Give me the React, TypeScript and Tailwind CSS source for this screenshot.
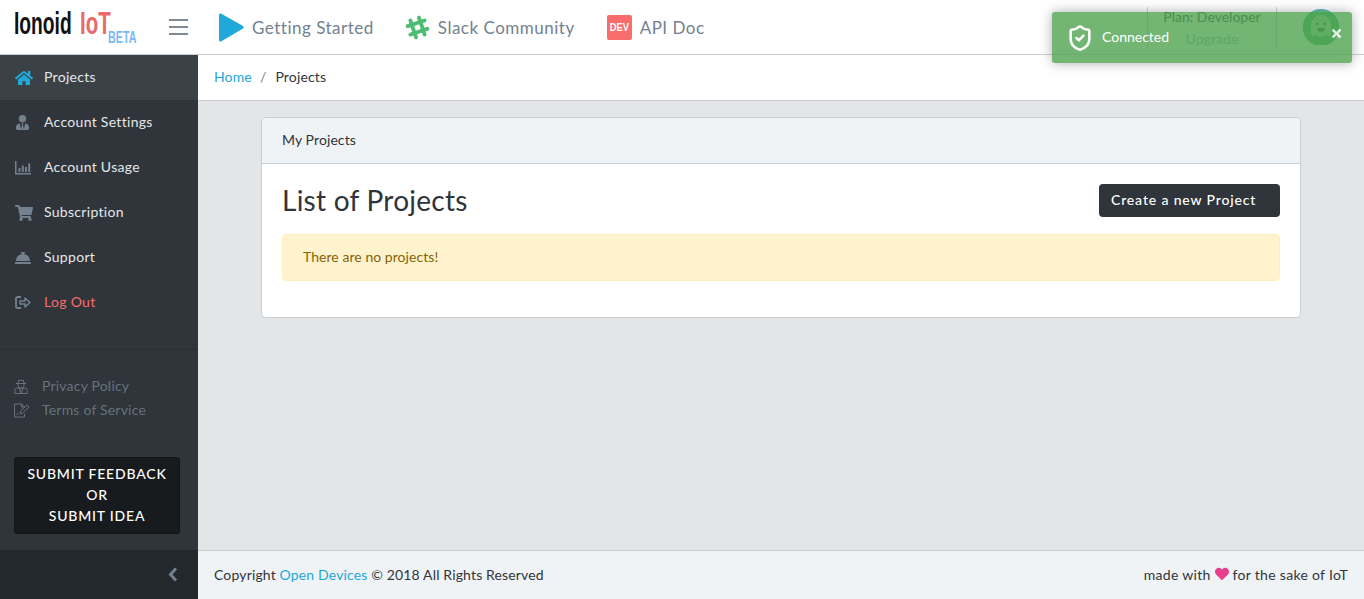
import { ShieldCheck } from "lucide-react";
import {
  FaConciergeBell,
  FaHeart,
  FaHome,
  FaShoppingCart,
  FaSlackHash,
  FaTimes,
  FaUserTie,
} from "react-icons/fa";
import type { ReactNode } from "react";

function UsageIcon() {
  return (
    <svg width="16" height="14" viewBox="0 0 16 14" fill="currentColor">
      <path d="M0 0h1.5v12H16v1.5H0z" />
      <rect x="3.5" y="7" width="2" height="4" />
      <rect x="6.8" y="4.5" width="2" height="6.5" />
      <rect x="10" y="6" width="2" height="5" />
      <rect x="13.2" y="2.5" width="2" height="8.5" />
    </svg>
  );
}

function LogoutIcon() {
  return (
    <svg width="16" height="13" viewBox="0 0 16 13" fill="none" stroke="currentColor">
      <path d="M6 1H2.5A1.5 1.5 0 0 0 1 2.5v8A1.5 1.5 0 0 0 2.5 12H6" strokeWidth="1.8" />
      <path d="M5 5h5V2l5 4.5-5 4.5V8H5z" strokeWidth="1.5" strokeLinejoin="round" />
    </svg>
  );
}

function SecretIcon() {
  return (
    <svg width="14" height="15" viewBox="0 0 14 15" fill="none" stroke="currentColor" strokeWidth="1">
      <path d="M4 4l.8-3 2.2.6L9.2 1 10 4M2 4.5h10" />
      <path d="M4 5v1.5a3 3 0 0 0 6 0V5" />
      <path d="M.8 14.5v-3A2.5 2.5 0 0 1 3.5 9h7a2.5 2.5 0 0 1 2.7 2.5v3zM5 9l2 5.5L9 9" />
    </svg>
  );
}

function TermsIcon() {
  return (
    <svg width="16" height="15" viewBox="0 0 16 15" fill="none" stroke="currentColor" strokeWidth="1">
      <path d="M10.5 10.5v3.5h-10V1h7l3 3v1" />
      <path d="M7.5 1v3h3" />
      <path d="M6 10.5l.7-2.5 6.3-6 2 2-6.3 6zM2.5 11.5c1-1.5 1.5-1 2 0" />
    </svg>
  );
}

function GhostAvatar() {
  return (
    <svg width="36" height="36" viewBox="0 0 36 36">
      <circle cx="18" cy="18" r="18" fill="#20a8d8" />
      <path d="M0 18a18 18 0 0 1 36 0 18 18 0 0 1-36 0z" fill="#3fb56f" transform="translate(0 1)" />
      <path d="M8 26V16a10 10 0 0 1 20 0v10c-2 2-4 1-5-1-1 3-3 3-5 3s-4 0-5-3c-1 2-3 3-5 1z" fill="#a4d6ab" />
      <circle cx="14.5" cy="15" r="1.3" fill="#2f5d3a" />
      <circle cx="21.5" cy="15" r="1.3" fill="#2f5d3a" />
      <path d="M14 19h8c0 2.5-1.8 3.6-4 3.6s-4-1.1-4-3.6z" fill="#2f5d3a" />
    </svg>
  );
}

const NAV: { label: string; icon: ReactNode; active?: boolean; danger?: boolean }[] = [
  { label: "Projects", icon: <FaHome size={18} className="text-[#20a8d8]" />, active: true },
  { label: "Account Settings", icon: <FaUserTie size={15} /> },
  { label: "Account Usage", icon: <UsageIcon /> },
  { label: "Subscription", icon: <FaShoppingCart size={18} /> },
  { label: "Support", icon: <FaConciergeBell size={16} /> },
  { label: "Log Out", icon: <LogoutIcon />, danger: true },
];

function Sidebar() {
  return (
    <aside className="w-[198px] shrink-0 flex flex-col bg-[#2f353a] tracking-[0.3px]">
      <nav className="h-[295px] shrink-0 border-b border-[#2a2f34]">
        {NAV.map((item) => (
          <a
            key={item.label}
            className={`h-[45px] flex items-center pl-[15px] ${item.active ? "bg-[#3a4248]" : ""} ${item.danger ? "text-[#f86c6b]" : "text-[#e4e7ea]"}`}
          >
            <span className="w-[29px] flex items-center text-[#73818f]">{item.icon}</span>
            <span className="pb-[2px]">{item.label}</span>
          </a>
        ))}
      </nav>
      <div className="pt-[24px] pl-[14px] text-[#66727d] tracking-[0.2px]">
        <a className="h-[24px] flex items-center">
          <span className="w-[28px]"><SecretIcon /></span>
          <span className="pb-[2px]">Privacy Policy</span>
        </a>
        <a className="h-[24px] flex items-center">
          <span className="w-[28px]"><TermsIcon /></span>
          <span className="pb-[2px]">Terms of Service</span>
        </a>
      </div>
      <div className="pt-[35px] pl-[14px] pr-[18px]">
        <button className="w-full h-[77px] pb-[2px] bg-[#181b1e] border border-[#121416] rounded-[3px] text-white text-[14px] leading-[21px] tracking-[0.8px] font-medium">
          SUBMIT FEEDBACK
          <br />
          OR
          <br />
          SUBMIT IDEA
        </button>
      </div>
      <div className="mt-auto h-[49px] bg-[#23282c] flex items-center justify-end pr-[20px] text-[#73818f]">
        <svg width="10" height="15" viewBox="0 0 10 15" fill="none" stroke="currentColor" strokeWidth="3">
          <path d="M8 1.5 2.5 7.5 8 13.5" />
        </svg>
      </div>
    </aside>
  );
}

function Logo() {
  return (
    <div className="w-[160px] pl-[14px] h-[54px] flex items-start font-['Liberation_Sans',sans-serif] font-bold">
      <span className="w-[66px] mt-[6px] text-[31px] leading-[36px] text-[#111] inline-block scale-x-[0.62] origin-left">Ionoid</span>
      <span className="w-[28px] mt-[6px] text-[31px] leading-[36px] text-[#e96a6a] inline-block scale-x-[0.66] origin-left">IoT</span>
      <span className="mt-[27px] text-[16.5px] leading-[20px] text-[#7ab8f5] inline-block scale-x-[0.65] origin-left">BETA</span>
    </div>
  );
}

function Header() {
  return (
    <header className="h-[55px] shrink-0 bg-white border-b border-[#c8ced3] flex items-center relative">
      <Logo />
      <div className="w-[59px] flex justify-start pl-[9px]">
        <div className="w-[19px] flex flex-col gap-[5px]">
          <span className="h-[2px] bg-[#7f8a94]" />
          <span className="h-[2px] bg-[#7f8a94]" />
          <span className="h-[2px] bg-[#7f8a94]" />
        </div>
      </div>
      <div className="flex items-center text-[#73818f] text-[17px] tracking-[0.5px] pt-[1px]">
        <svg width="25" height="29" viewBox="0 0 25 29" className="mr-[8px]">
          <path d="M2 0.5 24 13a1.5 1.5 0 0 1 0 2.6L2 28.5A1.5 1.5 0 0 1 0 27V2A1.5 1.5 0 0 1 2 0.5z" fill="#20a8d8" />
        </svg>
        Getting Started
        <FaSlackHash size={27} className="text-[#4dbd74] ml-[30px] mr-[7px]" />
        Slack Community
        <span className="ml-[32px] mr-[8px] w-[25px] h-[25px] rounded-[2px] bg-[#f86c6b] text-white text-[11px] tracking-normal font-bold flex items-center justify-center font-['Liberation_Sans',sans-serif]">
          <span className="inline-block scale-x-[0.85]">DEV</span>
        </span>
        API Doc
      </div>
      <div className="ml-auto flex items-center h-[41px]">
        <div className="w-[130px] h-[41px] border-x border-[#c8ced3] flex flex-col items-center leading-[21px] text-[#2f353a]">
          <span className="pb-[1px] leading-[20px]">Plan: Developer</span>
          <span className="text-[#87bec3] tracking-[0.1px]">Upgrade</span>
        </div>
        <div className="w-[87px] flex justify-center">
          <GhostAvatar />
        </div>
      </div>
    </header>
  );
}

function Toast() {
  return (
    <div className="absolute left-[1052px] top-[12px] w-[300px] h-[51px] rounded-[3px] bg-[#51a351] opacity-80 shadow-[0_0_12px_#999] flex items-center pl-[14px] text-white">
      <ShieldCheck size={28} strokeWidth={2.2} className="mr-[8px]" />
      <span className="pb-[2px]">Connected</span>
      <FaTimes size={13} className="absolute right-[9px] top-[15px]" />
    </div>
  );
}

export default function App() {
  return (
    <div className="h-screen flex flex-col overflow-hidden relative font-['Lato','Noto_Sans',sans-serif] text-[14px] text-[#2f353a]">
      <Header />
      <div className="flex-1 flex min-h-0">
        <Sidebar />
        <main className="flex-1 flex flex-col bg-[#e4e5e6] min-w-0">
          <div className="h-[46px] shrink-0 pb-[2px] bg-white border-b border-[#c8ced3] flex items-center pl-[16px] tracking-[0.15px]">
            <a className="text-[#20a8d8]">Home</a>
            <span className="text-[#73818f] ml-[8px] mr-[9px]">/</span>
            <span>Projects</span>
          </div>
          <div className="flex-1 pt-[16px] px-[63px]">
            <section className="bg-white border border-[#c8ced3] rounded-[4px] overflow-hidden">
              <div className="h-[46px] pb-[2px] bg-[#f0f3f5] border-b border-[#c8ced3] flex items-center px-[20px] tracking-[0.1px]">My Projects</div>
              <div className="px-[20px] pt-[20px] pb-[36px]">
                <div className="flex items-center justify-between h-[33px]">
                  <h1 className="text-[28px] leading-[33px] tracking-[0.25px]">List of Projects</h1>
                  <button className="w-[181px] h-[33px] pb-[2px] bg-[#2f353a] text-white rounded-[4px] text-left pl-[12px] font-medium tracking-[0.85px]">Create a new Project</button>
                </div>
                <div className="mt-[17px] h-[47px] pb-[2px] bg-[#fff3cd] border border-[#ffeeba] rounded-[4px] text-[#856404] flex items-center px-[20px] tracking-[0.05px]">
                  There are no projects!
                </div>
              </div>
            </section>
          </div>
          <footer className="h-[49px] shrink-0 pb-[2px] bg-[#f0f3f5] border-t border-[#c8ced3] flex items-center justify-between px-[16px] tracking-[0.15px]">
            <span>
              Copyright <a className="text-[#20a8d8]">Open Devices</a> © 2018 All Rights Reserved
            </span>
            <span className="flex items-center tracking-[0.3px]">
              made with <FaHeart size={14} className="text-[#e83e8c] mx-[4px]" /> for the sake of IoT
            </span>
          </footer>
        </main>
      </div>
      <Toast />
    </div>
  );
}
